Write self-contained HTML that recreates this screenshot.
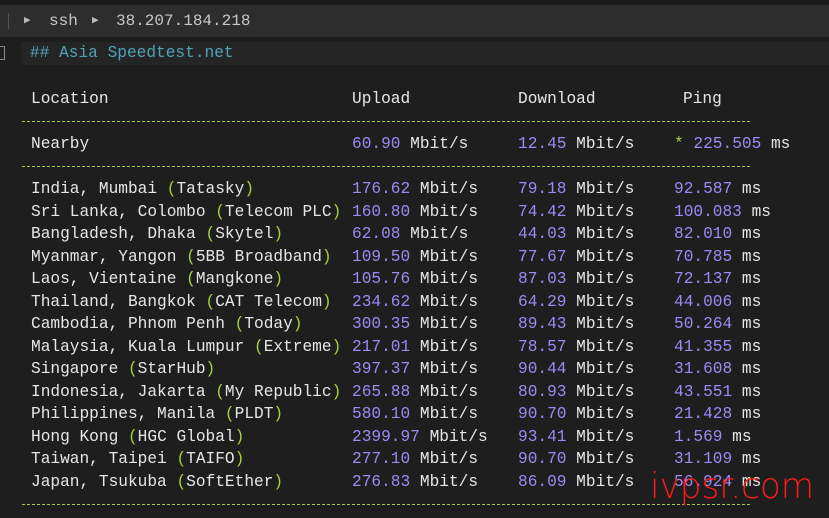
<!DOCTYPE html>
<html><head><meta charset="utf-8"><style>
body{margin:0;width:829px;height:518px;background:#1e1e1e;overflow:hidden;position:relative;font-family:"Liberation Mono",monospace;}
.top{position:absolute;left:0;top:0;width:829px;height:5px;background:#1a1a1a}
.bar{position:absolute;left:0;top:5px;width:829px;height:32px;background:#2d2d2d;color:#c8c8c8;font-size:16px;line-height:32px}
.bar .sep{position:absolute;left:8px;top:8px;width:1px;height:16px;background:#555}
.bar span{position:absolute;top:0}
.bar .ar{font-size:11px;color:#bbb}
.head{position:absolute;left:21px;top:42px;width:808px;height:23px;background:#252526;color:#4fa3b8;font-size:16.17px;line-height:23px}
.head span{position:absolute;left:9px}
.fold{position:absolute;left:-3px;top:46px;width:6px;height:12px;border:1px solid #888}
.r{position:absolute;left:0;width:829px;height:22.5px;line-height:22.5px;font-size:16.17px;color:#e6e6e6;white-space:pre}
.r span{position:absolute;top:0}
.c0{left:31px}.c1{left:352px}.c2{left:518px}.c3{left:674px}
.n{color:#9a8cf5}.g{color:#a6d13a}
.dash{position:absolute;left:22px;width:728px;height:0;border-top:1px dashed #a6d13a}
.wm{position:absolute;left:650px;top:466px;color:#ff1a1a;font-family:"DejaVu Sans",sans-serif;font-size:36px;font-weight:200;letter-spacing:0px;transform:scaleX(0.95);transform-origin:left}
</style></head><body>
<div class="top"></div>
<div class="bar"><div class="sep"></div><span class="ar" style="left:24px">▶</span><span style="left:49px">ssh</span><span class="ar" style="left:92px">▶</span><span style="left:116px">38.207.184.218</span></div>
<div class="fold"></div>
<div class="head"><span>## Asia Speedtest.net</span></div>

<div class="r" style="top:88px"><span class="c0">Location</span><span class="c1">Upload</span><span class="c2">Download</span><span style="left:683px">Ping</span></div>
<div class="dash" style="top:121px"></div>
<div class="r" style="top:133px"><span class="c0">Nearby</span><span class="c1"><b class="n" style="font-weight:normal">60.90</b> Mbit/s</span><span class="c2"><b class="n" style="font-weight:normal">12.45</b> Mbit/s</span><span class="c3"><b class="g" style="font-weight:normal">*</b> <b class="n" style="font-weight:normal">225.505</b> ms</span></div>
<div class="dash" style="top:166px"></div>

<div class="r" style="top:178px"><span class="c0">India, Mumbai <i class="g" style="font-style:normal">(</i>Tatasky<i class="g" style="font-style:normal">)</i></span><span class="c1"><b class="n" style="font-weight:normal">176.62</b> Mbit/s</span><span class="c2"><b class="n" style="font-weight:normal">79.18</b> Mbit/s</span><span class="c3"><b class="n" style="font-weight:normal">92.587</b> ms</span></div>
<div class="r" style="top:200.5px"><span class="c0">Sri Lanka, Colombo <i class="g" style="font-style:normal">(</i>Telecom PLC<i class="g" style="font-style:normal">)</i></span><span class="c1"><b class="n" style="font-weight:normal">160.80</b> Mbit/s</span><span class="c2"><b class="n" style="font-weight:normal">74.42</b> Mbit/s</span><span class="c3"><b class="n" style="font-weight:normal">100.083</b> ms</span></div>
<div class="r" style="top:223px"><span class="c0">Bangladesh, Dhaka <i class="g" style="font-style:normal">(</i>Skytel<i class="g" style="font-style:normal">)</i></span><span class="c1"><b class="n" style="font-weight:normal">62.08</b> Mbit/s</span><span class="c2"><b class="n" style="font-weight:normal">44.03</b> Mbit/s</span><span class="c3"><b class="n" style="font-weight:normal">82.010</b> ms</span></div>
<div class="r" style="top:245.5px"><span class="c0">Myanmar, Yangon <i class="g" style="font-style:normal">(</i>5BB Broadband<i class="g" style="font-style:normal">)</i></span><span class="c1"><b class="n" style="font-weight:normal">109.50</b> Mbit/s</span><span class="c2"><b class="n" style="font-weight:normal">77.67</b> Mbit/s</span><span class="c3"><b class="n" style="font-weight:normal">70.785</b> ms</span></div>
<div class="r" style="top:268px"><span class="c0">Laos, Vientaine <i class="g" style="font-style:normal">(</i>Mangkone<i class="g" style="font-style:normal">)</i></span><span class="c1"><b class="n" style="font-weight:normal">105.76</b> Mbit/s</span><span class="c2"><b class="n" style="font-weight:normal">87.03</b> Mbit/s</span><span class="c3"><b class="n" style="font-weight:normal">72.137</b> ms</span></div>
<div class="r" style="top:290.5px"><span class="c0">Thailand, Bangkok <i class="g" style="font-style:normal">(</i>CAT Telecom<i class="g" style="font-style:normal">)</i></span><span class="c1"><b class="n" style="font-weight:normal">234.62</b> Mbit/s</span><span class="c2"><b class="n" style="font-weight:normal">64.29</b> Mbit/s</span><span class="c3"><b class="n" style="font-weight:normal">44.006</b> ms</span></div>
<div class="r" style="top:313px"><span class="c0">Cambodia, Phnom Penh <i class="g" style="font-style:normal">(</i>Today<i class="g" style="font-style:normal">)</i></span><span class="c1"><b class="n" style="font-weight:normal">300.35</b> Mbit/s</span><span class="c2"><b class="n" style="font-weight:normal">89.43</b> Mbit/s</span><span class="c3"><b class="n" style="font-weight:normal">50.264</b> ms</span></div>
<div class="r" style="top:335.5px"><span class="c0">Malaysia, Kuala Lumpur <i class="g" style="font-style:normal">(</i>Extreme<i class="g" style="font-style:normal">)</i></span><span class="c1"><b class="n" style="font-weight:normal">217.01</b> Mbit/s</span><span class="c2"><b class="n" style="font-weight:normal">78.57</b> Mbit/s</span><span class="c3"><b class="n" style="font-weight:normal">41.355</b> ms</span></div>
<div class="r" style="top:358px"><span class="c0">Singapore <i class="g" style="font-style:normal">(</i>StarHub<i class="g" style="font-style:normal">)</i></span><span class="c1"><b class="n" style="font-weight:normal">397.37</b> Mbit/s</span><span class="c2"><b class="n" style="font-weight:normal">90.44</b> Mbit/s</span><span class="c3"><b class="n" style="font-weight:normal">31.608</b> ms</span></div>
<div class="r" style="top:380.5px"><span class="c0">Indonesia, Jakarta <i class="g" style="font-style:normal">(</i>My Republic<i class="g" style="font-style:normal">)</i></span><span class="c1"><b class="n" style="font-weight:normal">265.88</b> Mbit/s</span><span class="c2"><b class="n" style="font-weight:normal">80.93</b> Mbit/s</span><span class="c3"><b class="n" style="font-weight:normal">43.551</b> ms</span></div>
<div class="r" style="top:403px"><span class="c0">Philippines, Manila <i class="g" style="font-style:normal">(</i>PLDT<i class="g" style="font-style:normal">)</i></span><span class="c1"><b class="n" style="font-weight:normal">580.10</b> Mbit/s</span><span class="c2"><b class="n" style="font-weight:normal">90.70</b> Mbit/s</span><span class="c3"><b class="n" style="font-weight:normal">21.428</b> ms</span></div>
<div class="r" style="top:425.5px"><span class="c0">Hong Kong <i class="g" style="font-style:normal">(</i>HGC Global<i class="g" style="font-style:normal">)</i></span><span class="c1"><b class="n" style="font-weight:normal">2399.97</b> Mbit/s</span><span class="c2"><b class="n" style="font-weight:normal">93.41</b> Mbit/s</span><span class="c3"><b class="n" style="font-weight:normal">1.569</b> ms</span></div>
<div class="r" style="top:448px"><span class="c0">Taiwan, Taipei <i class="g" style="font-style:normal">(</i>TAIFO<i class="g" style="font-style:normal">)</i></span><span class="c1"><b class="n" style="font-weight:normal">277.10</b> Mbit/s</span><span class="c2"><b class="n" style="font-weight:normal">90.70</b> Mbit/s</span><span class="c3"><b class="n" style="font-weight:normal">31.109</b> ms</span></div>
<div class="r" style="top:470.5px"><span class="c0">Japan, Tsukuba <i class="g" style="font-style:normal">(</i>SoftEther<i class="g" style="font-style:normal">)</i></span><span class="c1"><b class="n" style="font-weight:normal">276.83</b> Mbit/s</span><span class="c2"><b class="n" style="font-weight:normal">86.09</b> Mbit/s</span><span class="c3"><b class="n" style="font-weight:normal">56.924</b> ms</span></div>
<div class="dash" style="top:504px"></div>
<div class="wm">ivpsr.com</div>
</body></html>
